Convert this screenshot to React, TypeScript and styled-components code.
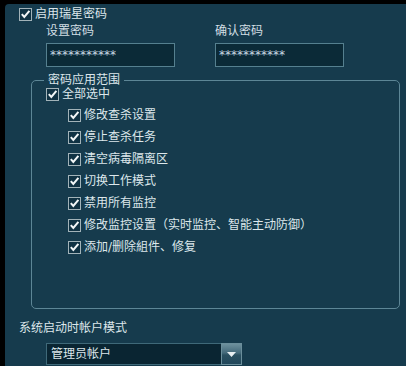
import React from "react"
import styled, { createGlobalStyle } from "styled-components"

const GlobalStyle = createGlobalStyle`
  html, body {
    margin: 0;
    padding: 0;
    background: #000;
  }
  body {
    font-family: "DejaVu Sans", "Noto Sans CJK SC", sans-serif;
    font-size: 12px;
    color: #dde7eb;
  }
`

const Panel = styled.div`
  margin: 4px 0 0 5px;
  width: 401px;
  height: 362px;
  padding-top: 2px;
  box-sizing: border-box;
  background: #163b4d;
  border-top-left-radius: 4px;
  overflow: hidden;
`

const CheckRow = styled.label<{ $indent: number; $height: number }>`
  display: flex;
  align-items: center;
  gap: 3px;
  height: ${(p) => p.$height}px;
  padding-left: ${(p) => p.$indent}px;
  line-height: ${(p) => Math.min(p.$height, 16)}px;
  white-space: nowrap;
`

const Box = styled.span`
  display: inline-flex;
  align-items: center;
  justify-content: center;
  width: 13px;
  height: 13px;
  box-sizing: border-box;
  border: 1px solid #a2b3b9;
  background: #103243;
  flex: none;
`

const PasswordRow = styled.div`
  display: flex;
  gap: 40px;
  padding-left: 41px;
  margin-top: 1px;
`

const Field = styled.div`
  display: flex;
  flex-direction: column;
  gap: 4px;
`

const Label = styled.div`
  line-height: 16px;
  color: #d3dfe4;
`

const Input = styled.div`
  width: 129px;
  height: 24px;
  box-sizing: border-box;
  border: 1px solid #55808f;
  background: #0b2a37;
  color: #c7dce3;
  padding-left: 3px;
  line-height: 22px;
  font-size: 12px;
`

const Group = styled.fieldset`
  margin: 6px 6px 0 26px;
  padding: 0 12px 50px 12px;
  border: 1px solid #5d8696;
  border-radius: 5px;
  min-width: 0;
`

const Legend = styled.legend`
  padding: 0 4px;
  line-height: 14px;
  font-size: 12px;
`

const Items = styled.div`
  margin-top: 3px;
  display: flex;
  flex-direction: column;
`

const AccountLabel = styled.div`
  margin-top: 11px;
  padding-left: 14px;
  line-height: 16px;
`

const Select = styled.div`
  display: flex;
  margin: 7px 0 0 41px;
  width: 196px;
  height: 22px;
`

const SelectValue = styled.div`
  flex: 1;
  border: 1px solid #3f6979;
  border-right: none;
  background: #0a2532;
  padding-left: 4px;
  line-height: 20px;
`

const SelectButton = styled.div`
  width: 21px;
  display: flex;
  align-items: center;
  justify-content: center;
  border: 1px solid #6a8e9b;
  box-sizing: border-box;
  background: linear-gradient(#6d909d 0%, #43697a 45%, #2a5061 55%, #21475a 100%);
`

function Check() {
  return (
    <Box>
      <svg width="11" height="11" viewBox="0 0 11 11">
        <path d="M1.8 5.2 L4.3 8 L9.4 1.8" fill="none" stroke="#f2f6f7" strokeWidth="2" />
      </svg>
    </Box>
  )
}

const items = [
  "修改查杀设置",
  "停止查杀任务",
  "清空病毒隔离区",
  "切换工作模式",
  "禁用所有监控",
  "修改监控设置（实时监控、智能主动防御）",
  "添加/删除組件、修复",
]

export default function App() {
  return (
    <>
      <GlobalStyle />
      <Panel>
        <CheckRow $indent={14} $height={16}>
          <Check />
          启用瑞星密码
        </CheckRow>
        <PasswordRow>
          <Field>
            <Label>设置密码</Label>
            <Input>***********</Input>
          </Field>
          <Field>
            <Label>确认密码</Label>
            <Input>***********</Input>
          </Field>
        </PasswordRow>
        <Group>
          <Legend>密码应用范围</Legend>
          <CheckRow $indent={2} $height={14}>
            <Check />
            全部选中
          </CheckRow>
          <Items>
            {items.map((item) => (
              <CheckRow key={item} $indent={24} $height={22}>
                <Check />
                {item}
              </CheckRow>
            ))}
          </Items>
        </Group>
        <AccountLabel>系统启动时帐户模式</AccountLabel>
        <Select>
          <SelectValue>管理员帐户</SelectValue>
          <SelectButton>
            <svg width="9" height="5" viewBox="0 0 9 5">
              <path d="M0 0 H9 L4.5 5 Z" fill="#e8eff2" />
            </svg>
          </SelectButton>
        </Select>
      </Panel>
    </>
  )
}
